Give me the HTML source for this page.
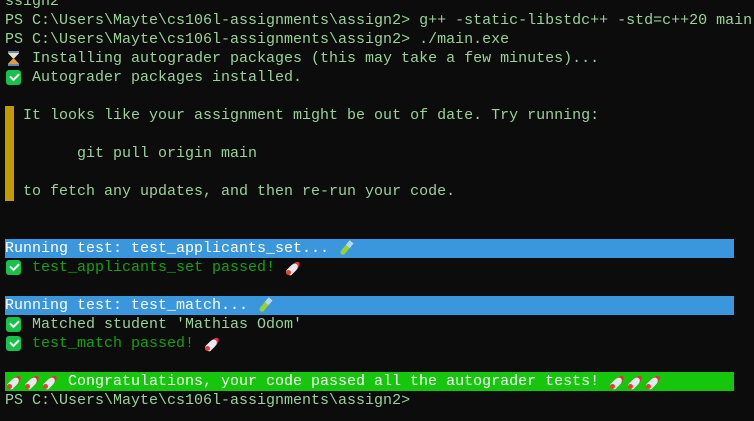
<!DOCTYPE html>
<html><head><style>
body{margin:0;background:#0c0c0c;width:754px;height:421px;overflow:hidden;position:relative;font-family:"Liberation Mono",monospace;font-size:15px;color:#98d298}
.l{position:absolute;left:5px;height:19px;line-height:19px;white-space:pre}
.e{display:inline-block;width:18px;height:19px;vertical-align:top;position:relative}
.ck::before{content:"";position:absolute;left:1px;top:2px;width:15px;height:15px;background:#17c24a;border-radius:3px}
.ck::after{content:"";position:absolute;left:5px;top:5px;width:7px;height:4px;border-left:2px solid #fff;border-bottom:2px solid #fff;transform:rotate(-45deg)}
.hg::before{content:"";position:absolute;left:3px;top:2px;width:11px;height:15px;background:linear-gradient(#6a88a8 0 2px,#e8e0c8 2px 7px,#d8a040 7px 13px,#6a88a8 13px);clip-path:polygon(0 0,100% 0,100% 15%,55% 50%,100% 85%,100% 100%,0 100%,0 85%,45% 50%,0 15%)}
.rk::before{content:"";position:absolute;left:6px;top:2px;width:7px;height:13px;background:#e8e8f0;border-radius:50% 50% 2px 2px;transform:rotate(45deg);border-top:3px solid #e03040}
.rk::after{content:"";position:absolute;left:2px;top:12px;width:5px;height:5px;background:#e84030;border-radius:50%}
.tb::before{content:"";position:absolute;left:6px;top:1px;width:5px;height:16px;background:linear-gradient(#b8d8f0 0 6px,#9ad030 6px);border-radius:0 0 3px 3px;transform:rotate(40deg)}
.bb{background:#3a96dd;color:#fff;width:729px}
.gb{background:#16c60c;color:#fff;width:729px}
.g{color:#13a10e}
</style></head><body>
<div class="l" style="top:-8px">ssign2"</div>
<div class="l" style="top:11px">PS C:\Users\Mayte\cs106l-assignments\assign2&gt; g++ -static-libstdc++ -std=c++20 main</div>
<div class="l" style="top:30px">PS C:\Users\Mayte\cs106l-assignments\assign2&gt; ./main.exe</div>
<div class="l" style="top:49px"><span class="e hg"></span> Installing autograder packages (this may take a few minutes)...</div>
<div class="l" style="top:68px"><span class="e ck"></span> Autograder packages installed.</div>
<div style="position:absolute;left:5px;top:106px;width:9px;height:95px;background:#c19c00"></div>
<div class="l" style="top:106px">  It looks like your assignment might be out of date. Try running:</div>
<div class="l" style="top:144px">        git pull origin main</div>
<div class="l" style="top:182px">  to fetch any updates, and then re-run your code.</div>
<div class="l bb" style="top:239px">Running test: test_applicants_set... <span class="e tb"></span></div>
<div class="l" style="top:258px"><span class="e ck"></span> <span class="g">test_applicants_set passed! </span><span class="e rk"></span></div>
<div class="l bb" style="top:296px">Running test: test_match... <span class="e tb"></span></div>
<div class="l" style="top:315px"><span class="e ck"></span> Matched student 'Mathias Odom'</div>
<div class="l" style="top:334px"><span class="e ck"></span> <span class="g">test_match passed! </span><span class="e rk"></span></div>
<div class="l gb" style="top:372px"><span class="e rk"></span><span class="e rk"></span><span class="e rk"></span> Congratulations, your code passed all the autograder tests! <span class="e rk"></span><span class="e rk"></span><span class="e rk"></span></div>
<div class="l" style="top:391px">PS C:\Users\Mayte\cs106l-assignments\assign2&gt;</div>
</body></html>
